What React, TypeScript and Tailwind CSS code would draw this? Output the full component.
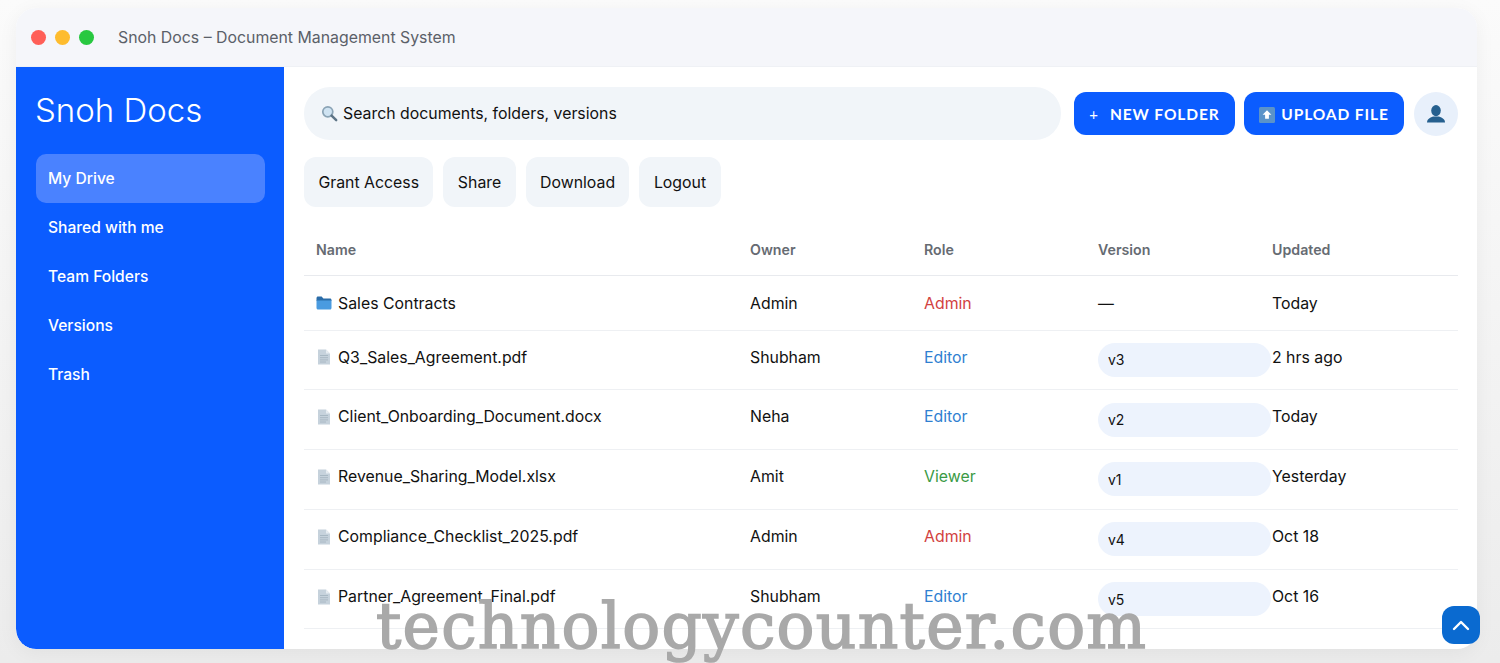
import React from 'react';

const navItems = ['My Drive', 'Shared with me', 'Team Folders', 'Versions', 'Trash'];
const actions = ['Grant Access', 'Share', 'Download', 'Logout'];

const roleColors: Record<string, string> = {
  Admin: 'text-[#d2423f]',
  Editor: 'text-[#2f7fd1]',
  Viewer: 'text-[#3a9a45]',
};

const rows = [
  { name: 'Q3_Sales_Agreement.pdf', owner: 'Shubham', role: 'Editor', version: 'v3', updated: '2 hrs ago' },
  { name: 'Client_Onboarding_Document.docx', owner: 'Neha', role: 'Editor', version: 'v2', updated: 'Today' },
  { name: 'Revenue_Sharing_Model.xlsx', owner: 'Amit', role: 'Viewer', version: 'v1', updated: 'Yesterday' },
  { name: 'Compliance_Checklist_2025.pdf', owner: 'Admin', role: 'Admin', version: 'v4', updated: 'Oct 18' },
  { name: 'Partner_Agreement_Final.pdf', owner: 'Shubham', role: 'Editor', version: 'v5', updated: 'Oct 16' },
];

const FolderIcon = () => (
  <svg width="16" height="14" viewBox="0 0 16 14" className="shrink-0">
    <path d="M0.5 2.2C0.5 1.3 1.2 0.6 2 0.6H5.6L7.4 2.4H14C14.9 2.4 15.5 3 15.5 3.9V5H0.5Z" fill="#2a6ca8" />
    <path d="M0.5 4.4H15.5V12C15.5 12.9 14.9 13.5 14 13.5H2C1.2 13.5 0.5 12.9 0.5 12Z" fill="#4a9be0" />
  </svg>
);

const DocIcon = () => (
  <svg width="14" height="16" viewBox="0 0 14 16" className="shrink-0">
    <path d="M1 0.5H9L13 4.5V15.5H1Z" fill="#c6d2dc" />
    <path d="M9 0.5L13 4.5H9Z" fill="#e6ecf1" />
    <path d="M3 6.5H11M3 8.7H11M3 10.9H11M3 13H9" stroke="#a5b4c0" strokeWidth="0.9" />
  </svg>
);

const SearchIcon = () => (
  <svg width="17" height="17" viewBox="0 0 17 17" className="shrink-0">
    <circle cx="6.8" cy="6.8" r="5" fill="#cfe3f2" stroke="#8aa3b5" strokeWidth="1.7" />
    <path d="M10.6 10.6L15.2 15.2" stroke="#5d7486" strokeWidth="2.4" strokeLinecap="round" />
  </svg>
);

const UploadIcon = () => (
  <svg width="16" height="16" viewBox="0 0 16 16" className="shrink-0">
    <rect width="16" height="16" rx="1.5" fill="#5b93c9" />
    <path d="M8 3.2L12.4 7.8H9.9V11.8H6.1V7.8H3.6Z" fill="#ffffff" />
  </svg>
);

const UserIcon = () => (
  <svg width="20" height="20" viewBox="0 0 20 20">
    <ellipse cx="10" cy="6.6" rx="4.8" ry="5.6" fill="#26608f" />
    <path d="M1 18.5C1 15 4.5 13.4 7.5 12.6H12.5C15.5 13.4 19 15 19 18.5Z" fill="#26608f" />
  </svg>
);

export default function App() {
  return (
    <div
      className="relative h-[663px] w-[1500px] overflow-hidden bg-gradient-to-b from-[#fbfbfb] to-[#ececec] pl-4 pt-2 text-[#111111]"
      style={{ fontFamily: 'Inter, "Noto Sans", sans-serif' }}
    >
      <div className="flex h-[641px] w-[1461px] flex-col overflow-hidden rounded-[20px] bg-white shadow-[0_4px_20px_rgba(0,0,0,0.05)]">
        <div className="flex h-[59px] shrink-0 items-center border-b border-[#eff1f5] bg-[#f5f6fa] pl-[15px]">
          <div className="flex gap-[9px]">
            <span className="h-[15px] w-[15px] rounded-full bg-[#ff5f57]" />
            <span className="h-[15px] w-[15px] rounded-full bg-[#febc2e]" />
            <span className="h-[15px] w-[15px] rounded-full bg-[#28c840]" />
          </div>
          <span className="ml-[24px] pt-[1px] text-[15.85px] text-[#5b6068]">Snoh Docs – Document Management System</span>
        </div>

        <div className="flex min-h-0 flex-1">
          <aside className="w-[268px] shrink-0 rounded-bl-[20px] bg-[#0b5cff] pl-5 pr-[19px] pt-[21px] text-white">
            <h1 className="-ml-[1px] text-[33px] font-light leading-[44px]">Snoh Docs</h1>
            <nav className="mt-[22px] flex flex-col">
              {navItems.map((item, i) => (
                <div
                  key={item}
                  className={`flex h-[49px] items-center rounded-[10px] px-3 text-[15.6px] font-medium ${
                    i === 0 ? 'bg-[#4a82ff]' : ''
                  }`}
                >
                  {item}
                </div>
              ))}
            </nav>
          </aside>

          <main className="min-w-0 flex-1 pl-5 pr-[19px] pt-5 text-[15.85px]">
            <div className="flex items-center">
              <div className="flex h-[53px] w-[757px] items-center gap-[5px] rounded-[26px] bg-[#f1f5f9] pl-[17px]">
                <SearchIcon />
                <span>Search documents, folders, versions</span>
              </div>
              <button
                className="ml-[13px] flex h-[43px] w-[161px] items-center justify-center gap-[11px] rounded-[12px] bg-[#0b5cff] pt-[2px] text-[15.5px] font-bold tracking-[0.9px] text-white"
                style={{ fontFamily: 'Lato, sans-serif' }}
              >
                <span className="text-[15px] font-normal">+</span>
                <span>NEW FOLDER</span>
              </button>
              <button
                className="ml-[9px] flex h-[43px] w-[160px] items-center justify-center gap-[6px] rounded-[12px] bg-[#0b5cff] pt-[2px] text-[15.5px] font-bold tracking-[0.9px] text-white"
                style={{ fontFamily: 'Lato, sans-serif' }}
              >
                <UploadIcon />
                <span>UPLOAD FILE</span>
              </button>
              <div className="ml-[10px] flex h-[44px] w-[44px] items-center justify-center rounded-full bg-[#e8f0fb]">
                <UserIcon />
              </div>
            </div>

            <div className="mt-[17px] flex gap-[10px]">
              {actions.map((label) => (
                <button key={label} className="h-[50px] rounded-[12px] bg-[#f1f5f9] px-[14.4px] pt-[1px]">
                  {label}
                </button>
              ))}
            </div>

            <table className="mt-[18px] w-[1154px] table-fixed border-collapse text-left">
              <colgroup>
                <col className="w-[434px]" />
                <col className="w-[174px]" />
                <col className="w-[174px]" />
                <col className="w-[174px]" />
                <col className="w-[198px]" />
              </colgroup>
              <thead>
                <tr className="h-[50px] border-b border-[#e8eaee] text-[14.2px] text-[#666b72]">
                  {['Name', 'Owner', 'Role', 'Version', 'Updated'].map((h) => (
                    <th key={h} className="px-3 font-semibold">{h}</th>
                  ))}
                </tr>
              </thead>
              <tbody>
                <tr className="h-[55px] border-b border-[#eef0f3]">
                  <td className="px-3 pt-[2px]">
                    <div className="flex items-center gap-[6px]">
                      <FolderIcon />
                      <span>Sales Contracts</span>
                    </div>
                  </td>
                  <td className="px-3 pt-[2px]">Admin</td>
                  <td className={`px-3 pt-[2px] ${roleColors.Admin}`}>Admin</td>
                  <td className="px-3 pt-[2px]">—</td>
                  <td className="px-3 pt-[2px]">Today</td>
                </tr>
                {rows.map((r) => (
                  <tr key={r.name} className="h-[59.8px] border-b border-[#eef0f3]">
                    <td className="px-3 pb-[5px]">
                      <div className="flex items-center gap-[7px] pl-[1px]">
                        <DocIcon />
                        <span>{r.name}</span>
                      </div>
                    </td>
                    <td className="px-3 pb-[5px]">{r.owner}</td>
                    <td className={`px-3 pb-[5px] ${roleColors[r.role]}`}>{r.role}</td>
                    <td className="px-3">
                      <span className="flex h-[34px] w-[173px] items-center rounded-[17px] bg-[#edf3fd] pl-[10px] text-[14px]">
                        {r.version}
                      </span>
                    </td>
                    <td className="px-3 pb-[5px]">{r.updated}</td>
                  </tr>
                ))}
              </tbody>
            </table>
          </main>
        </div>
      </div>

      {/* watermark + scroll button sit on top of the window */}
      <div
        className="absolute left-[376px] top-[591px] whitespace-nowrap text-[63px] font-normal leading-[72px] tracking-[1.3px] text-[#a9a9a9] [-webkit-text-stroke:1.6px_#a9a9a9]"
        style={{ fontFamily: '"DejaVu Serif", serif' }}
      >
        technologycounter.com
      </div>
      <button className="absolute left-[1442px] top-[606px] flex h-[38px] w-[38px] items-center justify-center rounded-[12px] bg-[#0a6ad0]">
        <svg width="20" height="12" viewBox="0 0 20 12" fill="none">
          <path d="M3 10L10 3L17 10" stroke="#ffffff" strokeWidth="2.4" strokeLinecap="round" strokeLinejoin="round" />
        </svg>
      </button>
    </div>
  );
}
